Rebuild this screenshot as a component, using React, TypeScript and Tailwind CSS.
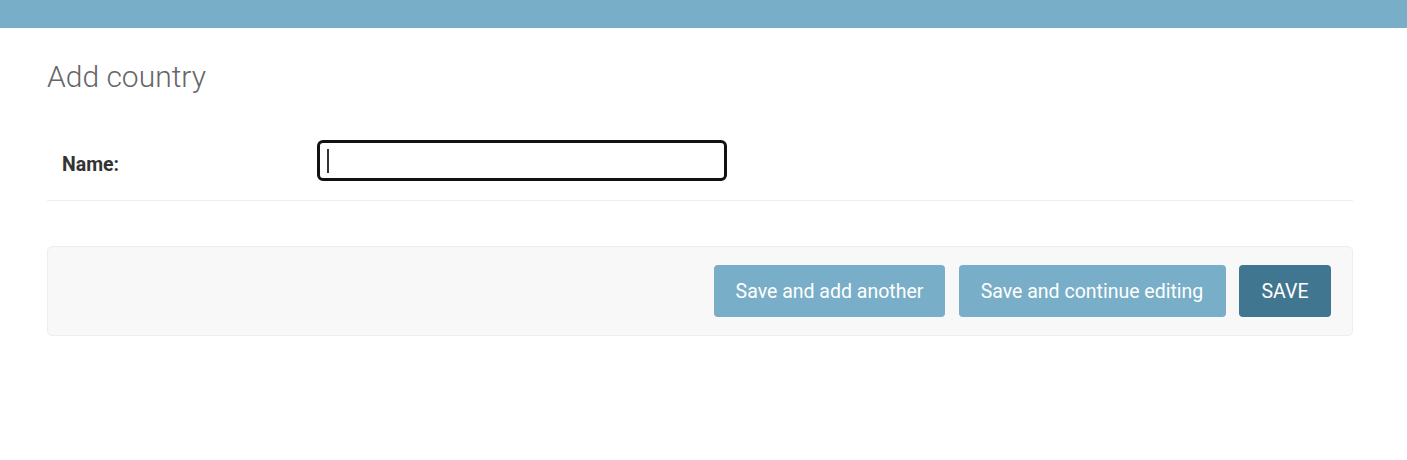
import React from "react";

export default function App() {
  return (
    <div className="min-h-[460px] bg-white" style={{ fontFamily: "Roboto, 'Liberation Sans', sans-serif" }}>
      <div className="h-[28px] bg-[#79aec8]" />
      <div className="pl-[47px] pr-[54px]">
        <h1 className="mt-[31px] text-[30px] font-light leading-[36px] text-[#666]">Add country</h1>
        <div className="mt-[26px] flex items-start border-b border-[#eee] py-[19px]">
          <label className="w-[270px] shrink-0 pl-[15px] pt-[13px] text-[19.5px] font-bold leading-[24px] text-[#333]">
            Name:
          </label>
          <div className="flex h-[41px] w-[410px] items-center rounded-[6px] border-[3px] border-[#111] bg-white pl-[7px]">
            <div className="h-[24px] w-[2px] bg-[#333]" />
          </div>
        </div>
        <div className="mt-[45px] flex justify-end gap-[13.5px] rounded-[5px] border border-[#eee] bg-[#f8f8f8] py-[18px] pr-[21px]">
          <button className="h-[52px] w-[231px] rounded-[4px] bg-[#79aec8] pt-[1px] text-[19.5px] text-white">
            Save and add another
          </button>
          <button className="h-[52px] w-[267px] rounded-[4px] bg-[#79aec8] pt-[1px] text-[19.5px] text-white">
            Save and continue editing
          </button>
          <button className="h-[52px] w-[92px] rounded-[4px] bg-[#417690] pt-[1px] text-[19.5px] text-white">
            SAVE
          </button>
        </div>
      </div>
    </div>
  );
}
